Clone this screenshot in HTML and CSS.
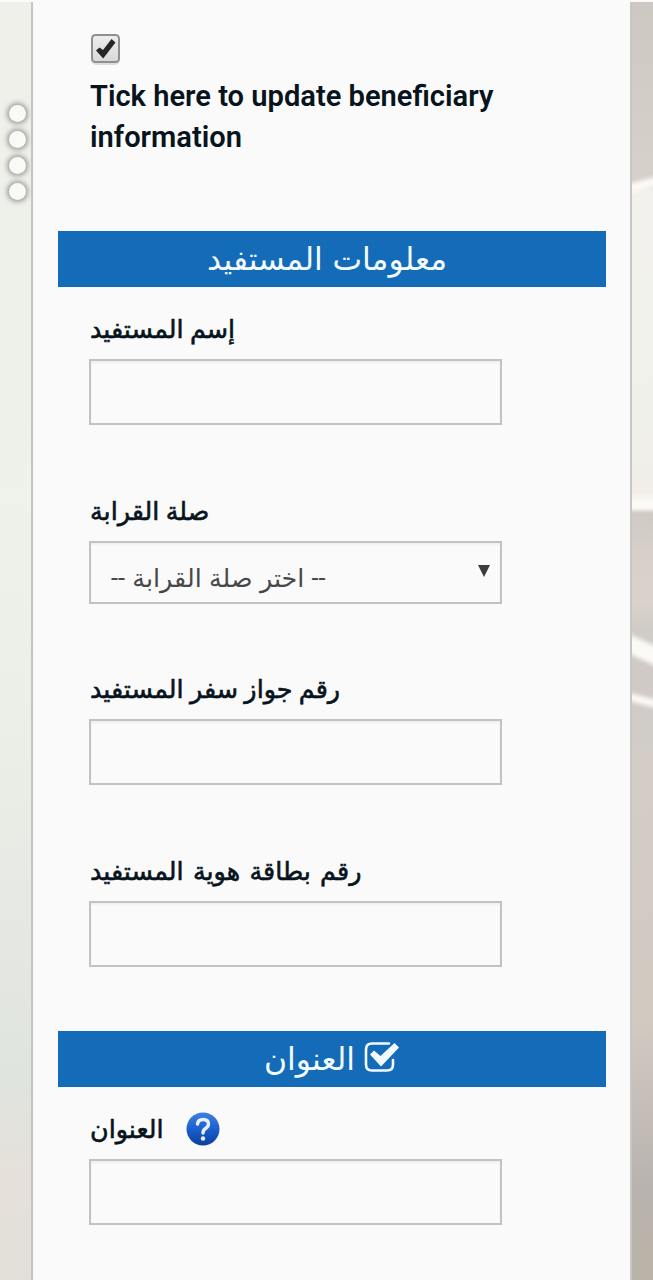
FILE: index.html
```html
<!DOCTYPE html>
<html lang="ar">
<head>
    <meta charset="UTF-8">
    <meta name="viewport" content="width=device-width, initial-scale=1.0">
    <title>معلومات المستفيد</title>
    <link rel="stylesheet" href="styles.css">
</head>
<body>
    <div class="page">
        <div class="side-left">
            <span class="dot"></span>
            <span class="dot"></span>
            <span class="dot"></span>
            <span class="dot"></span>
        </div>
        <form class="panel">
            <div class="update">
                <svg class="tick-box" viewBox="0 0 32 32">
                    <defs>
                        <linearGradient id="boxFill" x1="0" y1="0" x2="0" y2="1">
                            <stop offset="0" stop-color="#eee"/>
                            <stop offset="1" stop-color="#d8d8d8"/>
                        </linearGradient>
                    </defs>
                    <rect x="2" y="3" width="27" height="28" rx="4" fill="none" stroke="#ddd" stroke-width="2"/>
                    <rect x="2" y="2" width="27" height="27" rx="3.5" fill="url(#boxFill)" stroke="#8f8f8f" stroke-width="2"/>
                    <path d="M6 17.5L9.5 14.5L13 17L21.500 6L25.500 9.5L13.200 25.500Z" fill="#262626"/>
                </svg>
                <p>Tick here to update beneficiary information</p>
            </div>

            <h2 class="info-title">معلومات المستفيد</h2>
            <div class="field">
                <label for="name">إسم المستفيد</label>
                <input type="text" id="name">
            </div>
            <div class="field relation">
                <label>صلة القرابة</label>
                <div class="select">
                    <span dir="rtl">-- اختر صلة القرابة --</span>
                    <svg class="arrow" viewBox="0 0 12 12"><path d="M0 0H12L6 12Z" fill="#3c3c3c"/></svg>
                </div>
            </div>
            <div class="field">
                <label for="passport">رقم جواز سفر المستفيد</label>
                <input type="text" id="passport">
            </div>
            <div class="field card">
                <label for="card">رقم بطاقة هوية المستفيد</label>
                <input type="text" id="card">
            </div>

            <h2>
                <span>العنوان</span>
                <svg class="check" viewBox="0 0 36 32">
                    <path d="M25 2.500H8Q2 2.500 2 8.500V23.500Q2 29.500 8 29.500H23Q29 29.500 29 23.500V19" fill="none" stroke="#f4fbff" stroke-width="2.600" stroke-linecap="round"/>
                    <path d="M6 13.500L10 9.500L16.500 15L30.500 2L35 6.500L17 25.500Z" fill="#f4fbff"/>
                </svg>
            </h2>
            <div class="field">
                <label for="address">
                    <span>العنوان</span>
                    <svg class="help" viewBox="0 0 34 34">
                        <defs>
                            <linearGradient id="helpFill" x1="0" y1="0" x2="0" y2="1">
                                <stop offset="0" stop-color="#3f7fe0"/>
                                <stop offset=".5" stop-color="#1c5fd0"/>
                                <stop offset="1" stop-color="#0a3f9c"/>
                            </linearGradient>
                        </defs>
                        <circle cx="17" cy="17" r="16.500" fill="url(#helpFill)"/>
                        <path d="M11.500 12Q12 7.500 17 7.500Q22.500 7.500 22.500 12Q22.500 14.500 19.500 16.500Q17 18.200 17 21" fill="none" stroke="#e6f1ff" stroke-width="3.400" stroke-linecap="round"/>
                        <circle cx="17" cy="26.500" r="2.200" fill="#e6f1ff"/>
                    </svg>
                </label>
                <input type="text" id="address">
            </div>
        </form>
        <div class="side-right">
            <div class="streak up"></div>
            <div class="streak wide"></div>
            <div class="streak thin"></div>
        </div>
    </div>
</body>
</html>
```
FILE: styles.css
```css
* {
    box-sizing: border-box;
}

body {
    margin: 0;
    background: #fafafa;
    color: #07141d;
    font-family: Roboto, "DejaVu Sans", sans-serif;
}

.page {
    display: grid;
    grid-template-columns: 31px 601px 21px;
    height: 1280px;
    overflow: hidden;
    padding-top: 2px;
}

.side-left {
    display: flex;
    flex-direction: column;
    align-items: flex-end;
    gap: 9px;
    padding: 103px 5px 0 0;
    background: linear-gradient(#eef0e9 0, #eef2ea 500px, #ecefe8 720px, #e0e4de 1080px, #e5e0da 1170px, #e2ded8 100%);
}

.dot {
    width: 17px;
    height: 17px;
    border-radius: 50%;
    background: #f9faf7;
    box-shadow: 0 0 5px 2px #9a9b95;
}

.side-right {
    position: relative;
    overflow: hidden;
    background: linear-gradient(#cdc8c1 0, #d5d0ca 165px, #d5d0ca 178px, #f3f1ed 190px, #f0f1eb 380px, #f1eeea 490px, #fbfaf6 500px, #fbfaf6 506px, #cfcac4 511px, #d9d0ca 560px, #dad2cb 600px, #cfccc6 628px, #cfcac6 674px, #d0ccc8 738px, #d3cdc6 750px, #d2c9c1 1020px, #b9b3af 1180px, #b9b3a7 100%);
}

/* light reflections in the background photo */
.streak {
    position: absolute;
    left: -10px;
    width: 45px;
    background: #fbfaf7;
    filter: blur(2px);
}

.streak.up {
    top: 178px;
    height: 9px;
    transform: rotate(-16deg);
}

.streak.wide {
    top: 640px;
    height: 18px;
    transform: rotate(24deg);
}

.streak.thin {
    top: 695px;
    height: 8px;
    transform: rotate(14deg);
}

.panel {
    border-left: 2px solid #c4c4c2;
    border-right: 2px solid #c6c6c6;
    background: #fafafa;
    padding: 0 24px 0 25px;
}

.update {
    height: 229px;
    padding: 31px 31px 0 32px;
}

.tick-box {
    display: block;
    width: 32px;
    height: 32px;
}

.update p {
    margin: 11px 0 0;
    font-size: 29.1px;
    font-weight: 600;
    line-height: 41px;
}

h2 {
    display: flex;
    align-items: center;
    justify-content: center;
    height: 56px;
    margin: 0;
    background: #146cb8;
    color: #f4fbff;
    font-size: 31.4px;
    font-weight: 400;
}

.info-title {
    padding-right: 10px;
    word-spacing: 2px;
}

.field {
    width: 444px;
    margin-bottom: 44px;
    padding-left: 31px;
}

.field.relation {
    margin-bottom: 43px;
}

.field.card {
    margin-bottom: 64px;
}

label {
    display: flex;
    align-items: center;
    height: 72px;
    padding: 12px 0 0 1px;
    font-size: 25.4px;
    font-weight: 500;
    white-space: nowrap;
    -webkit-text-stroke: 0.6px #07141d;
}

.card label {
    word-spacing: 3px;
}

input,
.select {
    display: block;
    width: 413px;
    height: 66px;
    border: 2px solid #c2c2c2;
    border-radius: 0;
    background: #fafafa;
    box-shadow: inset 0 2px 2px #f0f0f0;
}

.select {
    display: flex;
    align-items: center;
    justify-content: space-between;
    height: 63px;
    padding: 0 10px 0 20px;
    color: #484848;
    font-size: 25.4px;
    word-spacing: 1px;
}

.select span {
    padding-top: 10px;
}

.arrow {
    width: 12px;
    height: 12px;
    margin-bottom: 3px;
}

.check {
    width: 36px;
    height: 32px;
    margin: 0 0 4px 9px;
}

.help {
    width: 34px;
    height: 34px;
    margin-left: 22px;
}
```
